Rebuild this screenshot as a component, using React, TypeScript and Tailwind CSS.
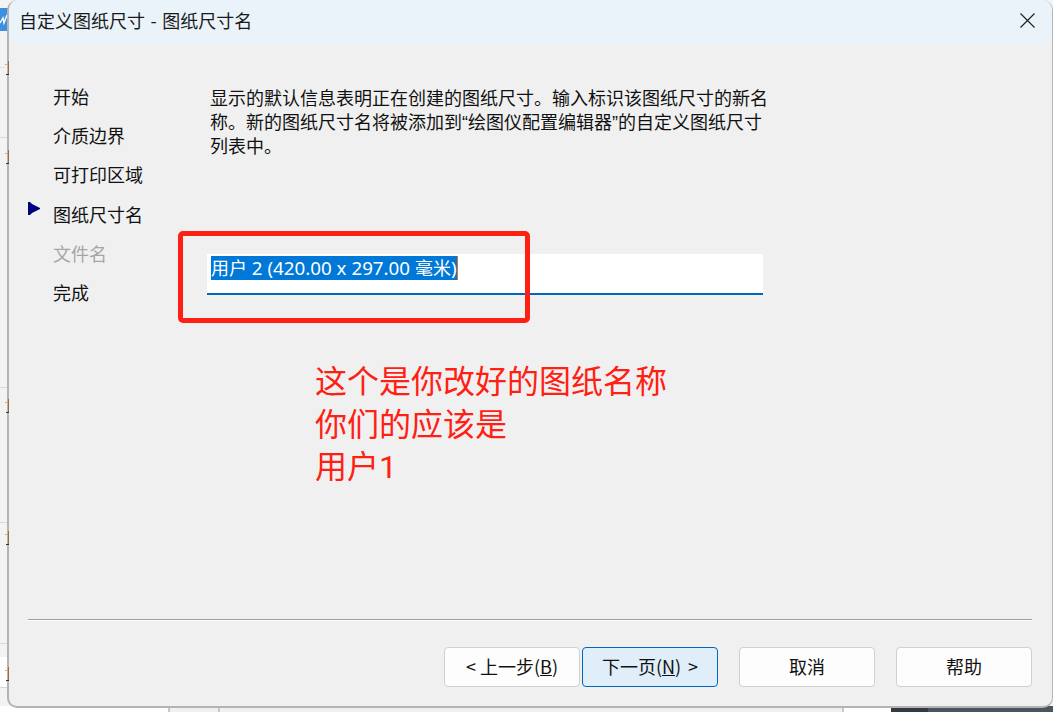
const cjk = "font-['Noto_Sans_CJK_SC','Noto_Sans',sans-serif]";

const steps = [
  { label: '开始' },
  { label: '介质边界' },
  { label: '可打印区域' },
  { label: '图纸尺寸名', current: true },
  { label: '文件名', disabled: true },
  { label: '完成' },
];

function WizardButton({ children, primary, className }: { children: React.ReactNode; primary?: boolean; className?: string }) {
  return (
    <button
      className={`flex h-10 w-[136px] items-center justify-center rounded-[4px] border pb-[2px] text-[18px] leading-none text-[#111] ${
        primary ? 'border-[#0067c0] bg-[#e0eef9]' : 'border-[#d0d0d0] bg-[#fdfdfd]'
      } ${className ?? ''}`}
    >
      {children}
    </button>
  );
}

// sliver of a clipped character from the window behind, sitting on the dialog's left edge
function Sliver({ className }: { className: string }) {
  return (
    <div className={`absolute left-[5px] h-[14px] w-[4px] ${className}`}>
      <div className="absolute left-0 top-[3px] h-px w-[3px] bg-[#c0b0a0]" />
      <div className="absolute left-[3px] top-0 h-full w-px bg-[#a06a30]" />
      <div className="absolute bottom-0 left-[1px] h-px w-[3px] bg-[#333]" />
    </div>
  );
}

function BehindWindow() {
  return (
    <>
      <div className="absolute left-0 top-[8px] h-[23px] w-[10px] bg-[#3f8fe0]">
        <svg width="8" height="23" viewBox="0 0 8 23" fill="none" stroke="#fff" strokeWidth="1.4">
          <path d="M0 15l3-5 1 5 3-8" />
        </svg>
      </div>
      <div className="absolute left-0 top-[67px] h-px w-[5px] bg-[#e0e0e0]" />
      <div className="absolute left-0 top-[137px] h-px w-[8px] bg-[#d8d8d8]" />
      <div className="absolute left-0 top-[387px] h-px w-[8px] bg-[#d8d8d8]" />
      <div className="absolute left-0 top-[522px] h-px w-[8px] bg-[#d8d8d8]" />
      <div className="absolute left-0 top-[643px] h-px w-[8px] bg-[#d8d8d8]" />
      <div className="absolute left-0 top-[657px] h-[31px] w-[8px] border-b border-[#d8d8d8] bg-white" />

      <div className="absolute bottom-0 left-0 flex h-[6px] w-full">
        <div className="w-[168px] bg-white" />
        <div className="w-[52px] border-x-2 border-[#c8c8c8] bg-[#f0f0f0]" />
        <div className="w-[622px] bg-[#f0f0f0]" />
        <div className="w-[49px] border-l-2 border-[#c8c8c8] bg-white" />
        <div className="w-[37px] bg-[#333a42]" />
        <div className="flex-1 bg-[#4a5560]" />
      </div>
    </>
  );
}

export default function App() {
  return (
    <div className={`${cjk} relative flex h-[712px] w-[1053px] overflow-hidden bg-[#f3f3f3]`}>
      <BehindWindow />
      <div className="w-[7px] shrink-0" />

      <div className="relative flex h-[708px] flex-1 flex-col rounded-[10px] border-x-2 border-b-2 border-r-[1px] border-[#b4b4b4] bg-[#f0f0f0]">
        <div className="flex h-[43px] shrink-0 items-center justify-between rounded-t-[10px] bg-[#eaf3f9] pb-[3px] pl-[10px] pr-[17px]">
          <span className="text-[18px] leading-none text-[#1a1a1a]">
            自定义图纸尺寸<span className="mx-[1.5px]"> - </span>图纸尺寸名
          </span>
          <svg width="15" height="15" viewBox="0 0 15 15" fill="none" stroke="#222" strokeWidth="1.2">
            <path d="M0.5 0.5l14 14M14.5 0.5l-14 14" />
          </svg>
        </div>

        <div className="flex flex-1">
          <ul className="w-[198px] shrink-0 pl-[44px] pt-[33.4px]">
            {steps.map((s) => (
              <li
                key={s.label}
                className={`relative flex h-[39.2px] items-center text-[18px] leading-none ${s.disabled ? 'text-[#a6a6a6]' : 'text-[#111]'}`}
              >
                {s.current && (
                  <svg className="absolute left-[-25px] top-[8px]" width="12" height="13" viewBox="0 0 12 13">
                    <path d="M0 0h2l2 2 8 4v1l-8 4-2 2H0z" fill="#000080" />
                  </svg>
                )}
                {s.label}
              </li>
            ))}
          </ul>

          <div className="flex-1 pt-[42px]">
            <div className="w-[570px] pl-[3px] text-[18px] text-[#111]">
              <div className="h-6 leading-[24px]">显示的默认信息表明正在创建的图纸尺寸。输入标识该图纸尺寸的新名</div>
              <div className="h-6 leading-[24px]">
                称。新的图纸尺寸名将被添加到<span className="font-['Liberation_Sans']">“</span>绘图仪配置编辑器<span className="font-['Liberation_Sans']">”</span>的自定义图纸尺寸
              </div>
              <div className="h-6 leading-[24px]">列表中。</div>
            </div>
            <div className="mt-[97px] h-[41px] w-[556px] border-b-2 border-[#0067c0] bg-white pl-[4px] pt-[2px]">
              <div className="inline-block h-[24px] border-r border-[#e0701a] bg-[#0078d7] text-[18px] leading-[23px] text-white">
                用户<span className="font-['Noto_Sans'] text-[18.75px] leading-[23px]"> 2 (420.00 x 297.00 </span>毫米<span className="font-['Noto_Sans'] text-[18.75px] leading-[23px]">)</span>
              </div>
            </div>
          </div>
        </div>

        <div className="mb-[26px] ml-[19px] mr-[20px] h-[2px] border-b border-t border-b-white border-t-[#a0a0a0]" />

        <div className="mb-[19px] flex justify-end pr-[20px]">
          <WizardButton>&lt; 上一步(<u>B</u>)</WizardButton>
          <WizardButton primary className="ml-[2px]">下一页(<u>N</u>)<span className="ml-[7px]">&gt;</span></WizardButton>
          <WizardButton className="ml-[21px]">取消</WizardButton>
          <WizardButton className="ml-[21px]">帮助</WizardButton>
        </div>
      </div>

      <Sliver className="top-[61px]" />
      <Sliver className="top-[150px]" />
      <Sliver className="top-[399px]" />
      <Sliver className="top-[531px]" />
      <Sliver className="top-[667px]" />

      {/* red annotations drawn over the dialog */}
      <div className="absolute left-[178px] top-[231px] h-[92px] w-[352px] rounded-[5px] border-[5px] border-[#ff2014]" />
      <div className="absolute left-[315px] top-[358px] text-[32px] leading-[42.5px] text-[#ff2014]">
        <div>这个是你改好的图纸名称</div>
        <div>你们的应该是</div>
        <div>用户<span className="font-['Roboto'] leading-[42.5px]">1</span></div>
      </div>
    </div>
  );
}
